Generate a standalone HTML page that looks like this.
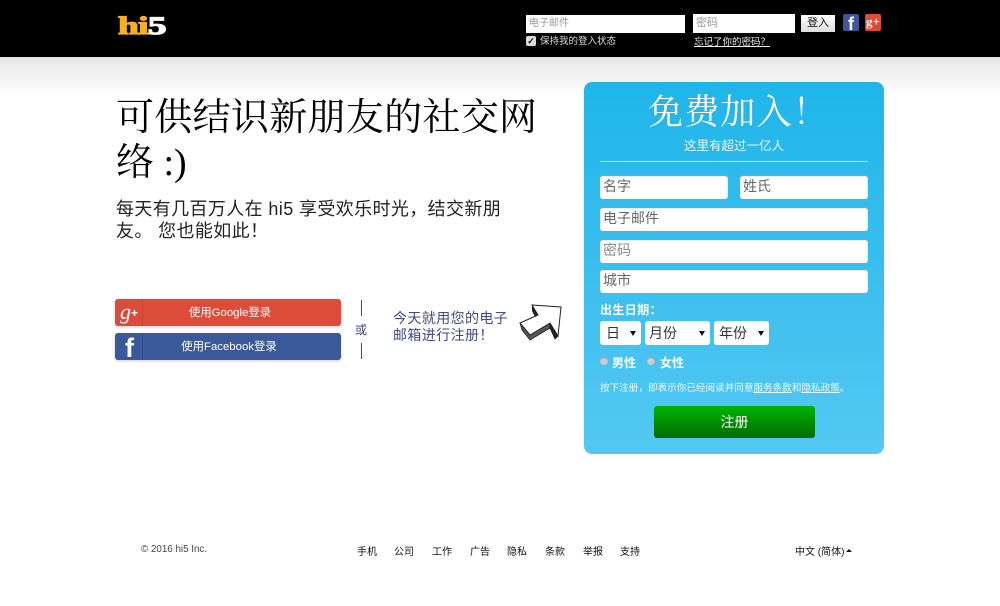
<!DOCTYPE html>
<html><head><meta charset="utf-8"><style>
html,body{margin:0;padding:0}
body{width:1000px;height:606px;position:relative;overflow:hidden;background:#fff;font-family:"Liberation Sans","WenQuanYi Zen Hei","Noto Sans CJK SC",sans-serif;color:#111}
.a{position:absolute;white-space:nowrap}
.i{position:absolute;background:#fff;border-radius:3px;box-shadow:inset 0 1px 1px #888;height:24px;line-height:22px;font-size:14px;color:#666;padding-left:3px;box-sizing:border-box}
.s{position:absolute;top:321px;height:24px;background:#fff;border-radius:3px;font-size:14px;line-height:24px;color:#333;box-sizing:border-box;padding-left:6px}
.s:after{content:"";position:absolute;right:5px;top:10px;border-left:3px solid transparent;border-right:3px solid transparent;border-top:5px solid #111}
.f{position:absolute;top:546px;font-size:10px;color:#111;white-space:nowrap;line-height:14px}
.r{position:absolute;top:357px;width:8px;height:8px;border-radius:50%;background:#ccc;box-shadow:inset 0 1px 1px #999}
</style></head><body>
<div class="a" style="left:0;top:0;width:1000px;height:57px;background:#000"></div>
<div class="a" style="left:0;top:57px;width:1000px;height:40px;background:linear-gradient(#e6e6e6,#fff)"></div>
<div class="a" style="left:118px;top:12px;font:900 25px/30px 'Liberation Serif',serif;letter-spacing:-.5px;color:#f5b21d;-webkit-text-stroke:1.2px #f5b21d;transform:scaleX(1.5);transform-origin:0 0">hi<span style="color:#fff;-webkit-text-stroke:1.2px #fff">5</span></div>
<div class="a" style="left:526px;top:15px;width:159px;height:18px;background:#fff;font-size:10px;line-height:18px;color:#999;padding-left:3px;box-sizing:border-box">电子邮件</div>
<div class="a" style="left:693px;top:14px;width:102px;height:19px;background:#fff;font-size:11px;line-height:19px;color:#999;padding-left:3px;box-sizing:border-box">密码</div>
<div class="a" style="left:801px;top:15px;width:34px;height:17px;background:linear-gradient(#fff,#ddd);font-size:11px;line-height:17px;color:#111;text-align:center">登入</div>
<div class="a" style="left:843px;top:14px;width:16px;height:17px;background:#3b5998;border-radius:2px"></div>
<div class="a" style="left:848px;top:15px;font:bold 18px/18px 'Liberation Sans',sans-serif;color:#fff">f</div>
<div class="a" style="left:865px;top:14px;width:16px;height:17px;background:#dd4b39;border-radius:2px;font:bold 13px/15px 'Liberation Serif',serif;color:#fff;text-align:center">g+</div>
<div class="a" style="left:526px;top:36px;width:10px;height:10px;background:#ddd;border-radius:2px;font:bold 9px/10px 'Liberation Sans',sans-serif;color:#111;text-align:center">✓</div>
<div class="a" style="left:540px;top:35px;font-size:9.5px;line-height:13px;color:#ddd">保持我的登入状态</div>
<div class="a" style="left:694px;top:36px;font-size:9.5px;line-height:13px;color:#eee;text-decoration:underline">忘记了你的密码？</div>

<div class="a" style="left:116px;top:95px;font:38px/46px 'Liberation Serif','Noto Serif CJK SC',serif;letter-spacing:.3px;color:#000">可供结识新朋友的社交网</div>
<div class="a" style="left:116px;top:140px;font:38px/46px 'Liberation Serif','Noto Serif CJK SC',serif;color:#000">络 :)</div>
<div class="a" style="left:116px;top:198px;font-size:18px;line-height:22px;letter-spacing:.38px;color:#222">每天有几百万人在 hi5 享受欢乐时光，结交新朋</div>
<div class="a" style="left:116px;top:220px;font-size:18px;line-height:22px;letter-spacing:.38px;color:#222">友。 您也能如此！</div>

<div class="a" style="left:115px;top:299px;width:226px;height:27px;background:#dd4b39;border-radius:3px;box-shadow:0 1px 3px #ccc"></div>
<div class="a" style="left:142px;top:299px;width:1px;height:27px;background:#c94232"></div>
<div class="a" style="left:120px;top:298px;font:italic 22px/27px 'Liberation Serif',serif;color:#fff">g<span style="font:bold 12px 'Liberation Sans',sans-serif;position:relative;top:-2px">+</span></div>
<div class="a" style="left:143px;top:300px;width:174px;height:27px;text-align:center;line-height:27px;font-size:11.4px;color:#fff">使用Google登录</div>
<div class="a" style="left:115px;top:333px;width:226px;height:27px;background:#3b5998;border-radius:3px;box-shadow:0 1px 3px #ccc"></div>
<div class="a" style="left:142px;top:333px;width:1px;height:27px;background:#34508a"></div>
<div class="a" style="left:125px;top:335px;font:bold 27px/27px 'Liberation Sans',sans-serif;color:#fff">f</div>
<div class="a" style="left:143px;top:334px;width:172px;height:26px;text-align:center;line-height:27px;font-size:11.4px;color:#fff">使用Facebook登录</div>
<div class="a" style="left:361px;top:300px;width:1px;height:16px;background:#3a4a78"></div>
<div class="a" style="left:355px;top:322px;font-size:12px;line-height:16px;color:#3a4a78">或</div>
<div class="a" style="left:361px;top:343px;width:1px;height:16px;background:#3a4a78"></div>
<div class="a" style="left:393px;top:310px;font-size:14px;line-height:17px;letter-spacing:.4px;color:#3f4a80">今天就用您的电子<br>邮箱进行注册！</div>
<svg class="a" style="left:517px;top:303px" width="46" height="38" viewBox="0 0 46 38">
<path d="M3 20L13 32 33 20 41 33 38 36 33 25 13 37 5 27Z" fill="#555" stroke="#222" stroke-width=".8"/>
<path d="M33 20L41 33 38 36 32 24Z" fill="#222"/>
<path d="M15 2L44 4 41 33 33 20 13 32 3 20 21 12Z" fill="#fff" stroke="#222" stroke-width="1"/>
<path d="M15 2L21 12 18 14 15 8Z" fill="#222"/>
</svg>

<div class="a" style="left:584px;top:82px;width:300px;height:372px;border-radius:8px;background:linear-gradient(#1fb5e9,#54c8f3)"></div>
<div class="a" style="left:648px;top:91px;font:35px/44px 'Liberation Serif','Noto Serif CJK SC',serif;letter-spacing:1.2px;color:#fff">免费加入！</div>
<div class="a" style="left:584px;top:137px;width:300px;text-align:center;font-size:12.5px;line-height:17px;padding-top:1px;color:#e8f8ff">这里有超过一亿人</div>
<div class="a" style="left:600px;top:161px;width:268px;height:1px;background:#a8e3f8"></div>
<div class="i" style="left:600px;top:175px;width:128px">名字</div>
<div class="i" style="left:740px;top:175px;width:128px">姓氏</div>
<div class="i" style="left:600px;top:207px;width:268px">电子邮件</div>
<div class="i" style="left:600px;top:239px;width:268px;color:#888">密码</div>
<div class="i" style="left:600px;top:269px;width:268px">城市</div>
<div class="a" style="left:600px;top:302px;font-size:12px;font-weight:bold;line-height:16px;letter-spacing:.4px;color:#fff">出生日期：</div>
<div class="s" style="left:600px;width:41px">日</div>
<div class="s" style="left:645px;width:65px;padding-left:4px">月份</div>
<div class="s" style="left:714px;width:55px;padding-left:5px">年份</div>
<div class="r" style="left:600px"></div>
<div class="a" style="left:612px;top:355px;font-size:12px;font-weight:bold;line-height:16px;color:#fff">男性</div>
<div class="r" style="left:647px"></div>
<div class="a" style="left:660px;top:355px;font-size:12px;font-weight:bold;line-height:16px;color:#fff">女性</div>
<div class="a" style="left:600px;top:382px;font-size:9.6px;line-height:14px;color:#eefaff">按下注册，即表示你已经阅读并同意<u>服务条款</u>和<u>隐私政策</u>。</div>
<div class="a" style="left:654px;top:406px;width:161px;height:32px;border-radius:3px;background:linear-gradient(#00b300,#006b00);text-align:center;font-size:14px;line-height:32px;color:#fff">注册</div>

<div class="f" style="left:141px;top:543px;color:#444;font-size:9.8px">© 2016 hi5 Inc.</div>
<div class="f" style="left:357px">手机</div>
<div class="f" style="left:394px">公司</div>
<div class="f" style="left:432px">工作</div>
<div class="f" style="left:470px">广告</div>
<div class="f" style="left:507px">隐私</div>
<div class="f" style="left:545px">条款</div>
<div class="f" style="left:583px">举报</div>
<div class="f" style="left:620px">支持</div>
<div class="f" style="left:795px">中文 (简体)</div>
<div class="a" style="left:846px;top:549px;border-left:3px solid transparent;border-right:3px solid transparent;border-bottom:3px solid #111"></div>
</body></html>
